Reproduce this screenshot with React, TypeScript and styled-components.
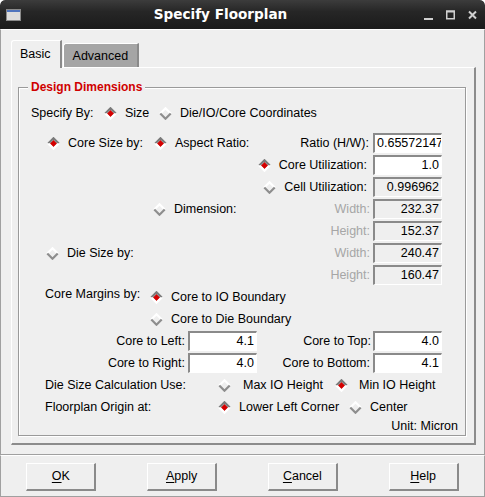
import React from 'react';
import styled, { createGlobalStyle } from 'styled-components';

const GlobalStyle = createGlobalStyle`
  html, body { margin: 0; padding: 0; background: #ffffff; }
  body {
    font-family: "Liberation Sans", Arial, sans-serif;
    font-size: 12.5px;
    color: #000;
  }
  #root { width: 485px; height: 497px; }
`;

const Window = styled.div`
  width: 485px;
  height: 497px;
  display: flex;
  flex-direction: column;
  background: #efefef;
  border-radius: 5px 5px 0 0;
  overflow: hidden;
`;

const TitleBar = styled.div`
  flex: none;
  height: 29px;
  box-sizing: border-box;
  display: flex;
  align-items: center;
  padding: 0 8px 0 6px;
  background: linear-gradient(#3c3c3c 0%, #262626 40%, #1b1b1b 100%);
  border-radius: 5px 5px 0 0;
`;

const Title = styled.div`
  flex: 1;
  text-align: center;
  color: #ffffff;
  font-family: "DejaVu Sans", "Liberation Sans", sans-serif;
  font-weight: bold;
  font-size: 13.6px;
  line-height: 29px;
`;

const Controls = styled.div`
  display: flex;
  align-items: center;
  gap: 13px;
  padding-left: 4px;
`;

const MainArea = styled.div`
  flex: 1;
  box-sizing: border-box;
  border: 1px solid;
  border-color: #ffffff #a0a0a0 #a0a0a0 #a0a0a0;
  padding: 10px 8px 8px 10px;
  display: flex;
  flex-direction: column;
`;

const TabBar = styled.div`
  display: flex;
  align-items: flex-end;
  gap: 1px;
  height: 27px;
  position: relative;
  z-index: 1;
`;

const Tab = styled.div<{ $active?: boolean }>`
  box-sizing: border-box;
  height: ${p => (p.$active ? 28 : 24)}px;
  margin-bottom: ${p => (p.$active ? -1 : 0)}px;
  padding: ${p => (p.$active ? '0 9px 2px 8px' : '0 9px 0 9px')};
  display: flex;
  align-items: center;
  background: ${p => (p.$active ? '#efefef' : '#a5a5a5')};
  border-style: solid;
  border-width: 1px 2px 0 1px;
  border-color: #ffffff #8a8a8a #8a8a8a #ffffff;
  border-top-left-radius: 3px;
  white-space: nowrap;
`;

const Panel = styled.div`
  box-sizing: border-box;
  border-style: solid;
  border-width: 1px 2px 2px 1px;
  border-color: #ffffff #8c8c8c #8c8c8c #ffffff;
  padding: 12px 8px 7px 6px;
`;

const Group = styled.fieldset`
  margin: 0;
  padding: 0 0 1px 0;
  min-width: 0;
  border: 1px solid #9a9a9a;
  box-shadow: inset 1px 1px 0 #ffffff, 1px 1px 0 #ffffff;
`;

const Legend = styled.legend`
  margin-left: 9px;
  padding: 0 3px;
  line-height: 14px;
  font-weight: bold;
  font-size: 12px;
  color: #cf0000;
  background: #efefef;
`;

const Content = styled.div`
  padding-top: 8px;
`;

const Spacer = styled.div<{ $h: number }>`
  height: ${p => p.$h}px;
`;

const Row = styled.div<{ $indent?: number; $h?: number }>`
  display: flex;
  align-items: center;
  height: ${p => p.$h ?? 22}px;
  padding-left: ${p => p.$indent ?? 0}px;
  padding-right: 23px;
`;

const Slot = styled.div<{ $w?: number; $right?: boolean; $top?: number }>`
  flex: none;
  ${p => (p.$w ? `width: ${p.$w}px;` : '')}
  display: flex;
  align-items: center;
  justify-content: ${p => (p.$right ? 'flex-end' : 'flex-start')};
  ${p => (p.$top !== undefined ? `align-self: flex-start; padding-top: ${p.$top}px;` : '')}
`;

const Group2 = styled.div<{ $gap: number; $push?: boolean }>`
  display: flex;
  align-items: center;
  gap: ${p => p.$gap}px;
  ${p => (p.$push ? 'margin-left: auto;' : '')}
`;

const Text = styled.span<{ $dim?: boolean }>`
  white-space: nowrap;
  line-height: 14px;
  color: ${p => (p.$dim ? '#a6a6a6' : '#000000')};
`;

const RadioWrap = styled.div<{ $w?: number; $gap: number }>`
  flex: none;
  ${p => (p.$w ? `width: ${p.$w}px;` : '')}
  display: flex;
  align-items: center;
  gap: ${p => p.$gap}px;
`;

const Entry = styled.div<{ $disabled?: boolean }>`
  flex: none;
  box-sizing: border-box;
  width: 69px;
  height: 20px;
  border-style: solid;
  border-width: 2px 1px 1px 2px;
  border-color: #8a8a8a #ffffff #ffffff #8a8a8a;
  background: ${p => (p.$disabled ? '#efefef' : '#ffffff')};
  padding: 0 2px 0 2px;
  line-height: 17px;
  text-align: right;
  overflow: hidden;
  white-space: nowrap;
`;

const UnitRow = styled.div`
  display: flex;
  justify-content: flex-end;
  align-items: center;
  height: 16px;
  padding-right: 7px;
`;

const ButtonBar = styled.div`
  flex: none;
  height: 42px;
  box-sizing: border-box;
  border: 1px solid;
  border-color: #ffffff #a0a0a0 #a0a0a0 #a0a0a0;
  display: grid;
  grid-template-columns: repeat(4, 1fr);
  align-items: center;
  justify-items: center;
`;

const Button = styled.button`
  box-sizing: border-box;
  width: 70px;
  height: 28px;
  margin-top: 1px;
  padding: 0;
  background: #efefef;
  border-style: solid;
  border-width: 1px 2px 2px 1px;
  border-color: #ffffff #8a8a8a #8a8a8a #ffffff;
  font-family: "Liberation Sans", Arial, sans-serif;
  font-size: 12.5px;
  color: #000;
  u { text-decoration: underline; text-underline-offset: 2px; }
`;

const Diamond: React.FC<{ on?: boolean }> = ({ on }) => (
  <svg width="13" height="13" viewBox="0 0 13 13" style={{ flex: 'none' }}>
    {on && <polygon points="6.5,3 10,6.5 6.5,10 3,6.5" fill="#d40000" />}
    <polyline
      points="1.3,6.5 6.5,1.3 11.7,6.5"
      fill="none"
      stroke={on ? '#7a7a7a' : '#ffffff'}
      strokeWidth="2.2"
    />
    <polyline
      points="1.3,6.5 6.5,11.7 11.7,6.5"
      fill="none"
      stroke={on ? '#ffffff' : '#8e8e8e'}
      strokeWidth="2.2"
    />
  </svg>
);

const Radio: React.FC<{ on?: boolean; label: string; w?: number; gap?: number }> = ({
  on,
  label,
  w,
  gap = 8,
}) => (
  <RadioWrap $w={w} $gap={gap}>
    <Diamond on={on} />
    <Text>{label}</Text>
  </RadioWrap>
);

const WinIcon = () => (
  <svg width="15" height="12" viewBox="0 0 15 12">
    <rect x="0.5" y="0.5" width="14" height="11" fill="#dcdcdc" stroke="#8a8a8a" />
    <rect x="1" y="1" width="13" height="2" fill="#4f74bd" />
  </svg>
);

const MinIcon = () => (
  <svg width="9" height="10" viewBox="0 0 9 10">
    <rect x="0" y="8" width="9" height="2" fill="#cfcfcf" />
  </svg>
);

const MaxIcon = () => (
  <svg width="9" height="10" viewBox="0 0 9 10">
    <rect x="0.75" y="1.25" width="7.5" height="7.5" fill="none" stroke="#cfcfcf" strokeWidth="1.5" />
    <rect x="0" y="0.5" width="9" height="2" fill="#cfcfcf" />
  </svg>
);

const CloseIcon = () => (
  <svg width="9" height="10" viewBox="0 0 9 10">
    <path d="M1 1.5 L8 8.5 M8 1.5 L1 8.5" stroke="#cfcfcf" strokeWidth="2" />
  </svg>
);

export default function App() {
  return (
    <>
      <GlobalStyle />
      <Window>
        <TitleBar>
          <WinIcon />
          <Title>Specify Floorplan</Title>
          <Controls>
            <MinIcon />
            <MaxIcon />
            <CloseIcon />
          </Controls>
        </TitleBar>

        <MainArea>
          <TabBar>
            <Tab $active>Basic</Tab>
            <Tab>Advanced</Tab>
          </TabBar>
          <Panel>
            <Group>
              <Legend>Design Dimensions</Legend>
              <Content>
                <Row $indent={12}>
                  <Slot $w={73}>
                    <Text>Specify By:</Text>
                  </Slot>
                  <Radio w={55} on label="Size" />
                  <Radio label="Die/IO/Core Coordinates" />
                </Row>
                <Spacer $h={8} />

                <Row $indent={28}>
                  <Radio w={107} on label="Core Size by:" />
                  <Radio on label="Aspect Ratio:" />
                  <Group2 $gap={4} $push>
                    <Text>Ratio (H/W):</Text>
                    <Entry>0.65572147</Entry>
                  </Group2>
                </Row>
                <Row>
                  <Group2 $gap={6} $push>
                    <Radio on label="Core Utilization:" />
                    <Entry>1.0</Entry>
                  </Group2>
                </Row>
                <Row>
                  <Group2 $gap={6} $push>
                    <Radio label="Cell Utilization:" />
                    <Entry $disabled>0.996962</Entry>
                  </Group2>
                </Row>
                <Row $indent={134}>
                  <Radio label="Dimension:" />
                  <Group2 $gap={3} $push>
                    <Text $dim>Width:</Text>
                    <Entry $disabled>232.37</Entry>
                  </Group2>
                </Row>
                <Row>
                  <Group2 $gap={3} $push>
                    <Text $dim>Height:</Text>
                    <Entry $disabled>152.37</Entry>
                  </Group2>
                </Row>
                <Row $indent={27}>
                  <Radio label="Die Size by:" />
                  <Group2 $gap={3} $push>
                    <Text $dim>Width:</Text>
                    <Entry $disabled>240.47</Entry>
                  </Group2>
                </Row>
                <Row>
                  <Group2 $gap={3} $push>
                    <Text $dim>Height:</Text>
                    <Entry $disabled>160.47</Entry>
                  </Group2>
                </Row>

                <Row $indent={26}>
                  <Slot $w={105} $top={1}>
                    <Text>Core Margins by:</Text>
                  </Slot>
                  <Radio on label="Core to IO Boundary" />
                </Row>
                <Row $indent={131}>
                  <Radio label="Core to Die Boundary" />
                </Row>
                <Row>
                  <Group2 $gap={3}>
                    <Slot $w={166} $right>
                      <Text>Core to Left:</Text>
                    </Slot>
                    <Entry>4.1</Entry>
                  </Group2>
                  <Group2 $gap={2} $push>
                    <Text>Core to Top:</Text>
                    <Entry>4.0</Entry>
                  </Group2>
                </Row>
                <Row>
                  <Group2 $gap={3}>
                    <Slot $w={166} $right>
                      <Text>Core to Right:</Text>
                    </Slot>
                    <Entry>4.0</Entry>
                  </Group2>
                  <Group2 $gap={3} $push>
                    <Text>Core to Bottom:</Text>
                    <Entry>4.1</Entry>
                  </Group2>
                </Row>
                <Row $indent={26}>
                  <Slot $w={173}>
                    <Text>Die Size Calculation Use:</Text>
                  </Slot>
                  <Radio w={117} gap={12} label="Max IO Height" />
                  <Radio gap={11} on label="Min IO Height" />
                </Row>
                <Row $indent={26}>
                  <Slot $w={173}>
                    <Text>Floorplan Origin at:</Text>
                  </Slot>
                  <Radio w={131} on label="Lower Left Corner" />
                  <Radio label="Center" />
                </Row>
                <UnitRow>
                  <Text>Unit: Micron</Text>
                </UnitRow>
              </Content>
            </Group>
          </Panel>
        </MainArea>

        <ButtonBar>
          <Button>
            <u>O</u>K
          </Button>
          <Button>
            <u>A</u>pply
          </Button>
          <Button>
            <u>C</u>ancel
          </Button>
          <Button>
            <u>H</u>elp
          </Button>
        </ButtonBar>
      </Window>
    </>
  );
}
